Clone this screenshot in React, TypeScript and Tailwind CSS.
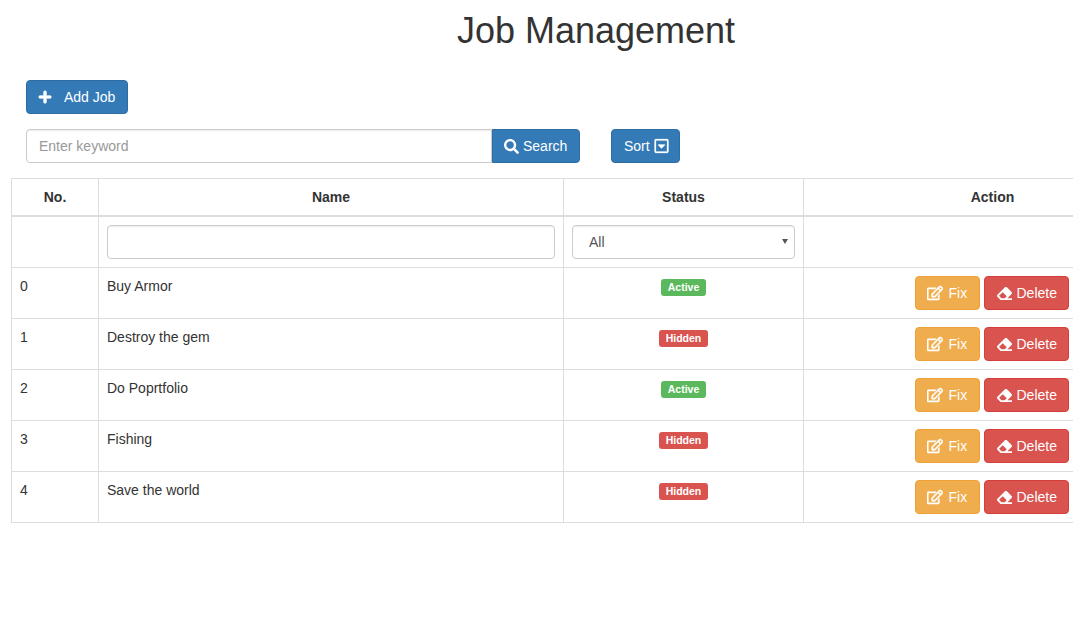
import React from "react";
import { FaSearch, FaRegCaretSquareDown, FaRegEdit, FaEraser, FaPlus } from "react-icons/fa";

const jobs = [
  { no: 0, name: "Buy Armor", active: true },
  { no: 1, name: "Destroy the gem", active: false },
  { no: 2, name: "Do Poprtfolio", active: true },
  { no: 3, name: "Fishing", active: false },
  { no: 4, name: "Save the world", active: false },
];

export default function App() {
  return (
    <div className="h-[641px] w-[1073px] overflow-hidden bg-white font-['Liberation_Sans',Arial,sans-serif] text-[14px] leading-[20px] text-[#333]">
      <div className="ml-[11px] w-[1170px]">
        <h1 className="pt-[11px] text-center text-[36px] font-normal leading-[40px]">Job Management</h1>

        <div className="mt-[29px] pl-[15px]">
          <button className="flex h-[34px] w-[102px] items-center rounded-[4px] border border-[#2e6da4] bg-[#337ab7] pl-[11px] text-white">
            <FaPlus className="h-[14px] w-[14px]" stroke="currentColor" strokeWidth={24} />
            <span className="ml-[12px]">Add Job</span>
          </button>
        </div>

        <div className="mt-[15px] flex pl-[15px]">
          <input
            placeholder="Enter keyword"
            className="h-[34px] w-[466px] rounded-l-[4px] border border-[#ccc] px-[12px] text-[#555] shadow-[inset_0_1px_1px_rgba(0,0,0,0.075)] outline-none placeholder:text-[#999]"
          />
          <button className="flex h-[34px] w-[88px] items-center gap-[4px] rounded-r-[4px] border border-[#2e6da4] bg-[#337ab7] pl-[11px] text-white">
            <FaSearch className="h-[15px] w-[15px]" />
            Search
          </button>
          <button className="ml-[31px] flex h-[34px] w-[69px] items-center gap-[4px] rounded-[4px] border border-[#2e6da4] bg-[#337ab7] pl-[12px] text-white">
            Sort
            <FaRegCaretSquareDown className="h-[16px] w-[15px]" stroke="currentColor" strokeWidth={8} />
          </button>
        </div>

        <table className="mt-[15px] w-[1170px] table-fixed border-collapse">
          <colgroup>
            <col className="w-[87px]" />
            <col className="w-[465px]" />
            <col className="w-[240px]" />
            <col className="w-[378px]" />
          </colgroup>
          <thead>
            <tr>
              {["No.", "Name", "Status", "Action"].map((h) => (
                <th key={h} className="border border-b-2 border-[#ddd] p-[8px] text-center font-bold">
                  {h}
                </th>
              ))}
            </tr>
          </thead>
          <tbody>
            <tr>
              <td className="border border-[#ddd] p-[8px]"></td>
              <td className="border border-[#ddd] p-[8px]">
                <input className="block h-[34px] w-full rounded-[4px] border border-[#ccc] px-[12px] text-[#555] shadow-[inset_0_1px_1px_rgba(0,0,0,0.075)] outline-none" />
              </td>
              <td className="border border-[#ddd] p-[8px]">
                <div className="relative">
                  <select className="block h-[34px] w-full appearance-none rounded-[4px] border border-[#ccc] bg-white pl-[16px] pr-[12px] text-[#555] shadow-[inset_0_1px_1px_rgba(0,0,0,0.075)] outline-none">
                    <option>All</option>
                  </select>
                  <svg className="pointer-events-none absolute right-[7px] top-[14px] h-[5px] w-[6px]" viewBox="0 0 6 5">
                    <path d="M0 0H6L3 5Z" fill="#555" />
                  </svg>
                </div>
              </td>
              <td className="border border-[#ddd] p-[8px]"></td>
            </tr>
            {jobs.map((j) => (
              <tr key={j.no}>
                <td className="border border-[#ddd] p-[8px] align-top">{j.no}</td>
                <td className="border border-[#ddd] p-[8px] align-top">{j.name}</td>
                <td className="border border-[#ddd] p-[8px] text-center align-top">
                  <span
                    className={`mt-[3px] inline-block rounded-[3px] px-[7px] pb-[3px] pt-[2px] align-top text-[10.5px] font-bold leading-[12px] text-white ${
                      j.active ? "bg-[#5cb85c]" : "bg-[#d9534f]"
                    }`}
                  >
                    {j.active ? "Active" : "Hidden"}
                  </span>
                </td>
                <td className="border border-[#ddd] p-[8px] align-top">
                  <div className="flex justify-center gap-[4px] pr-[2px]">
                    <button className="flex h-[34px] w-[65px] items-center gap-[6px] rounded-[4px] border border-[#eea236] bg-[#f0ad4e] pl-[11px] text-white">
                      <FaRegEdit className="h-[16px] w-[16px]" stroke="currentColor" strokeWidth={16} />
                      Fix
                    </button>
                    <button className="flex h-[34px] w-[85px] items-center gap-[5px] rounded-[4px] border border-[#d43f3a] bg-[#d9534f] pl-[12px] text-white">
                      <FaEraser className="h-[15px] w-[15px]" />
                      Delete
                    </button>
                  </div>
                </td>
              </tr>
            ))}
          </tbody>
        </table>
      </div>
    </div>
  );
}
